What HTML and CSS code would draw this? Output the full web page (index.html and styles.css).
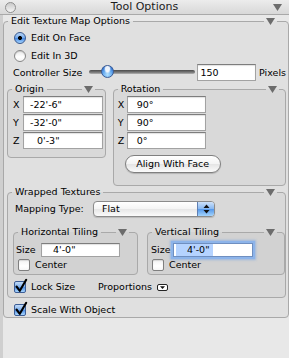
FILE: index.html
```html
<!DOCTYPE html>
<html>
<head>
<meta charset="utf-8">
<title>Tool Options</title>
<link rel="stylesheet" href="styles.css">
</head>
<body>
<div class="window">
  <div class="titlebar">
    <span class="close"></span>
    <span class="title">Tool Options</span>
    <svg class="tri title-tri" viewBox="0 0 9 7"><path d="M0 0H9L4.5 7Z"/></svg>
  </div>
  <div class="panel">
    <fieldset class="group outer">
      <legend class="head"><span class="head-in"><span class="lt">Edit Texture Map Options</span><span class="rule"></span><svg class="tri" viewBox="0 0 9 7"><path d="M0 0H9L4.5 7Z"/></svg><span class="rule end"></span></span></legend>
      <div class="outer-body">
        <div class="radio-row"><span class="radio on"></span><span>Edit On Face</span></div>
        <div class="radio-row r2"><span class="radio"></span><span>Edit In 3D</span></div>
        <div class="ctrl-row">
          <span class="ctrl-label">Controller Size</span>
          <span class="slider"><span class="track"></span><span class="thumb"></span></span>
          <span class="field f150">150</span>
          <span class="unit">Pixels</span>
        </div>
        <div class="xyz-row">
          <fieldset class="group origin">
            <legend class="head"><span class="head-in"><span class="lt">Origin</span><span class="rule"></span><svg class="tri" viewBox="0 0 9 7"><path d="M0 0H9L4.5 7Z"/></svg><span class="rule end"></span></span></legend>
            <div class="xyz-grid">
              <span class="axis">X</span><span class="field fo">-22'-6"</span>
              <span class="axis">Y</span><span class="field fo">-32'-0"</span>
              <span class="axis">Z</span><span class="field fo ind">0'-3"</span>
            </div>
          </fieldset>
          <fieldset class="group rotation">
            <legend class="head"><span class="head-in"><span class="lt">Rotation</span><span class="rule"></span><svg class="tri" viewBox="0 0 9 7"><path d="M0 0H9L4.5 7Z"/></svg><span class="rule end"></span></span></legend>
            <div class="rot-body">
              <div class="xyz-grid rot-grid">
                <span class="axis">X</span><span class="field fr">90°</span>
                <span class="axis">Y</span><span class="field fr">90°</span>
                <span class="axis">Z</span><span class="field fr">0°</span>
              </div>
              <div class="btn">Align With Face</div>
            </div>
          </fieldset>
        </div>
        <fieldset class="group wrapped">
          <legend class="head"><span class="head-in"><span class="lt">Wrapped Textures</span><span class="rule"></span><svg class="tri" viewBox="0 0 9 7"><path d="M0 0H9L4.5 7Z"/></svg><span class="rule end"></span></span></legend>
          <div class="wrapped-body">
            <div class="map-row">
              <span class="map-label">Mapping Type:</span>
              <div class="popup">
                <span class="popup-text">Flat</span>
                <span class="popup-arrows"><svg width="7" height="10" viewBox="0 0 7 10"><path d="M3.5 0.5L6.5 4H0.5Z M0.5 6H6.5L3.5 9.5Z"/></svg></span>
              </div>
            </div>
            <div class="tiling-row">
              <fieldset class="group horiz">
                <legend class="head"><span class="head-in"><span class="lt">Horizontal Tiling</span><span class="rule"></span><svg class="tri" viewBox="0 0 9 7"><path d="M0 0H9L4.5 7Z"/></svg><span class="rule end"></span></span></legend>
                <div class="tile-body">
                  <div class="size-row"><span class="size-label">Size</span><span class="field small">4'-0"</span></div>
                  <div class="check-row center-row"><span class="cb"></span><span>Center</span></div>
                </div>
              </fieldset>
              <fieldset class="group vert">
                <legend class="head"><span class="head-in"><span class="lt">Vertical Tiling</span><span class="rule"></span><svg class="tri" viewBox="0 0 9 7"><path d="M0 0H9L4.5 7Z"/></svg><span class="rule end"></span></span></legend>
                <div class="tile-body">
                  <div class="size-row"><span class="size-label">Size</span><span class="field small focus"><span class="sel">4'-0"</span></span></div>
                  <div class="check-row center-row"><span class="cb"></span><span>Center</span></div>
                </div>
              </fieldset>
            </div>
            <div class="check-row lock-row">
              <span class="cb on"><svg viewBox="0 0 14 15"><path d="M2.5 8.5L5.8 12.8L12.2 1.8"/></svg></span>
              <span class="lock-label">Lock Size</span>
              <span>Proportions</span>
              <svg class="mini" width="11" height="7" viewBox="0 0 11 7"><rect x="0.5" y="0.5" width="10" height="6" rx="1.5"/><path d="M3 2.2H8L5.5 5Z"/></svg>
            </div>
          </div>
        </fieldset>
        <div class="check-row scale-row">
          <span class="cb on"><svg viewBox="0 0 14 15"><path d="M2.5 8.5L5.8 12.8L12.2 1.8"/></svg></span>
          <span>Scale With Object</span>
        </div>
      </div>
    </fieldset>
  </div>
</div>
</body>
</html>
```

FILE: styles.css
```css
* { box-sizing: border-box; }
html, body { margin: 0; overflow: hidden; }
body {
  font-family: "DejaVu Sans", sans-serif;
  font-size: 9.5px;
  line-height: 12px;
  color: #000;
  background: #e7e7e7;
}
.window { width: 289px; height: 358px; overflow: hidden; background: #e8e8e8; }

.titlebar {
  height: 15px;
  border-bottom: 1px solid #a9a9a9;
  background: linear-gradient(#ececec, #d8d8d8);
  display: grid;
  grid-template-columns: 1fr auto 1fr;
  align-items: center;
}
.close {
  width: 11px; height: 11px; margin-left: 5px;
  border-radius: 50%;
  border: 1px solid #8f8f8f;
  background: linear-gradient(#c9c9c9, #f5f5f5);
}
.title { font-size: 11px; line-height: 14px; color: #1c1c1c; }
.tri { width: 9px; height: 7px; margin: 0 2px; display: block; flex: none; fill: #6c6c6c; }
.title-tri { justify-self: end; margin: 0 7px 0 0; }

.panel { border-left: 3px solid #cfcfcf; height: 343px; }

fieldset.group {
  margin: 0; padding: 0; min-width: 0;
  border: 1px solid #a9a9a9;
  border-radius: 4px;
  background: rgba(0, 0, 0, 0.03);
}
legend.head { padding: 0; margin-left: 4px; width: calc(100% - 6px); line-height: 12px; }
.head-in { display: flex; align-items: center; height: 12px; }
.lt { padding: 0 3px; white-space: nowrap; }
.rule { flex: 1; height: 1px; background: #a9a9a9; }
.rule.end { flex: none; width: var(--tail); }

.outer { margin: 3px -6px 0 0; --tail: 9px; }
.outer-body { padding: 2px 2px 1px 3px; }

.radio-row { display: flex; align-items: center; gap: 5px; padding-left: 7px; height: 18px; }
.radio-row.r2 { height: 17px; }
.radio {
  width: 12px; height: 12px; border-radius: 50%;
  border: 1px solid #878787;
  background: linear-gradient(#e9e9e9, #ffffff 60%, #f4f4f4);
  box-shadow: inset 0 1px 1px rgba(0,0,0,0.15);
}
.radio.on {
  border-color: #39598f;
  background:
    radial-gradient(circle, #000 0 1.7px, transparent 2.3px),
    linear-gradient(#b9d6f7, #72a9ec 50%, #4486e2 51%, #a7d6ff);
  box-shadow: none;
}

.ctrl-row { display: flex; align-items: center; height: 17px; padding-left: 6px; }
.ctrl-label { width: 77px; white-space: nowrap; }
.slider { position: relative; width: 106px; height: 17px; }
.track {
  position: absolute; left: 0; right: 0; top: 6px; height: 4px;
  border-radius: 2px;
  background: linear-gradient(#4a4a4a, #7c7c7c 60%, #b5b5b5);
}
.thumb {
  position: absolute; left: 12px; top: 1px; width: 13px; height: 13px;
  border-radius: 50%;
  border: 1px solid #3b5b93;
  background:
    radial-gradient(ellipse at 50% 25%, rgba(255,255,255,0.9) 0 25%, transparent 45%),
    radial-gradient(circle at 50% 80%, #b3e2ff 0, #64a8ee 45%, #2d6fd0 80%);
}
.field {
  display: block;
  height: 17px;
  background: #fff;
  border: 1px solid #a2a2a2;
  border-top-color: #7d7d7d;
  box-shadow: inset 0 1px 1px rgba(0,0,0,0.12);
  line-height: 15px;
  white-space: nowrap;
  overflow: hidden;
}
.f150 { width: 60px; margin-left: 2px; padding-left: 3px; }
.unit { margin-left: 3px; white-space: nowrap; }

.xyz-row { display: flex; align-items: flex-start; gap: 7px; margin-top: 2px; }
.origin { width: 99px; --tail: 8px; }
.rotation { width: 174px; --tail: 4px; }
.xyz-grid {
  display: grid;
  grid-template-columns: 10px 80px;
  row-gap: 1px;
  align-items: center;
  padding: 1px 0 8px 5px;
}
.axis { line-height: 12px; }
.fo { padding-left: 6px; }
.fo.ind { padding-left: 13px; }
.rot-body { padding: 1px 0 12px 4px; }
.rot-grid { grid-template-columns: 9px 79px; padding: 0; }
.fr { padding-left: 9px; }
.btn {
  width: 96px; height: 18px; margin: 6px 0 0 7px;
  border: 1px solid #7f7f7f;
  border-radius: 9px;
  background: linear-gradient(#ffffff, #f3f3f3 50%, #e4e4e4 51%, #fbfbfb);
  box-shadow: 0 1px 1px rgba(0,0,0,0.18);
  text-align: center;
  line-height: 16px;
}

.wrapped { margin-top: 3px; --tail: 6px; }
.wrapped-body { padding: 3px 0 4px 5px; }
.map-row { display: flex; align-items: center; height: 16px; padding-left: 2px; }
.map-label { width: 78px; white-space: nowrap; }
.popup {
  width: 122px; height: 16px;
  display: flex; align-items: stretch;
  border: 1px solid #8b8b8b;
  border-radius: 4px;
  overflow: hidden;
  background: linear-gradient(#ffffff, #f4f4f4 50%, #e6e6e6 51%, #fbfbfb);
  box-shadow: 0 1px 1px rgba(0,0,0,0.15);
}
.popup-text { flex: 1; padding-left: 8px; line-height: 14px; }
.popup-arrows {
  width: 17px;
  border-left: 1px solid #5f7fb3;
  background: linear-gradient(#cde1fa, #86b7f1 50%, #5497ea 51%, #a4d4fc);
  display: flex; align-items: center; justify-content: center;
}
.popup-arrows svg { fill: #111; }

.tiling-row { display: flex; gap: 9px; margin-top: 9px; }
.horiz { width: 125px; --tail: 6px; }
.vert { width: 138px; --tail: 5px; }
.tile-body { padding: 5px 0 3px 2px; }
.vert .tile-body { padding-left: 3px; }
.size-row { display: flex; align-items: center; height: 14px; }
.size-label { width: 25px; }
.vert .size-label { width: 22px; }
.field.small { height: 14px; width: 79px; line-height: 12px; padding-left: 11px; }
.vert .field.small { width: 80px; padding-left: 2px; }
.field.focus {
  border-color: #6f8fc0;
  box-shadow: 0 0 0 2px #8db4ea, 0 0 2px 3px rgba(120,165,230,0.6);
}
.sel { display: inline-block; background: #b5d3ff; padding: 0 3px 0 11px; }

.check-row { display: flex; align-items: center; height: 12px; gap: 5px; }
.center-row { margin: 2px 0 0 2px; }
.vert .center-row { margin-left: 1px; }
.cb {
  position: relative;
  width: 12px; height: 12px; flex: none;
  border: 1px solid #7f7f7f;
  border-radius: 2px;
  background: linear-gradient(#f2f2f2, #ffffff 60%, #f6f6f6);
  box-shadow: inset 0 1px 1px rgba(0,0,0,0.12);
}
.cb.on {
  border-color: #3d5d95;
  background: linear-gradient(#c2dbf8, #7db0ee 50%, #4a8ce5 51%, #a8d6fe);
  box-shadow: none;
}
.cb svg {
  position: absolute; left: -1px; top: -4px; width: 14px; height: 15px;
  fill: none; stroke: #000; stroke-width: 2.1px; stroke-linecap: round; stroke-linejoin: round;
}
.lock-row { margin: 6px 0 0 1px; }
.lock-label { width: 62px; white-space: nowrap; }
.mini { flex: none; margin-left: 0; }
.mini rect { fill: #fff; stroke: #222; }
.mini path { fill: #111; }
.scale-row { margin: 6px 0 0 7px; }
```
